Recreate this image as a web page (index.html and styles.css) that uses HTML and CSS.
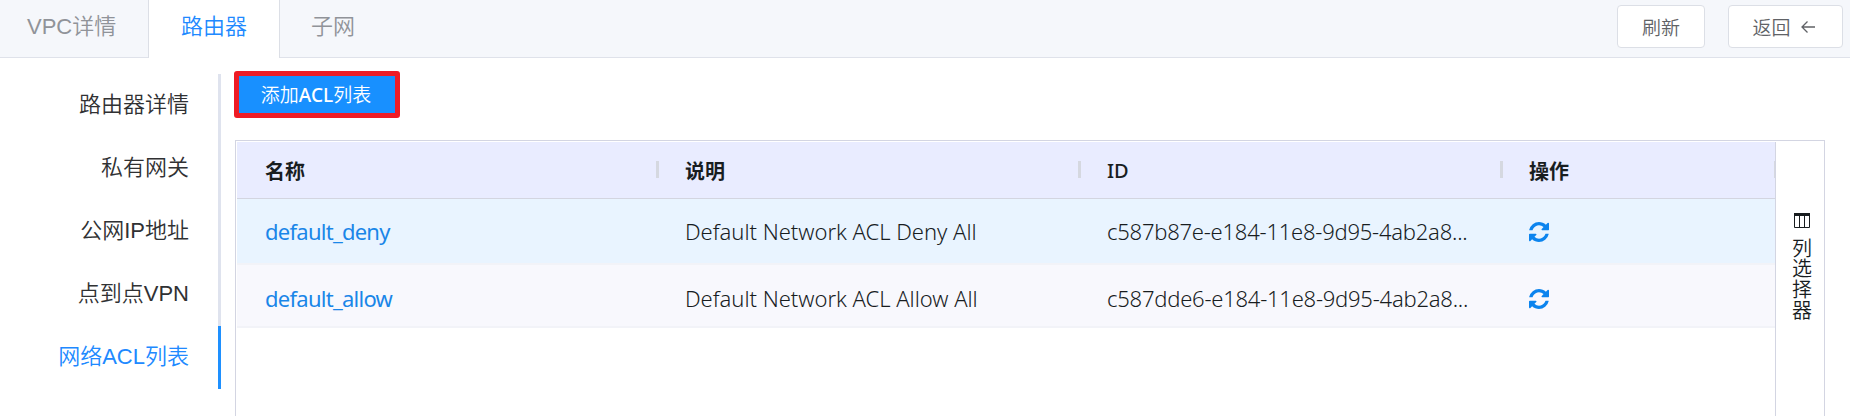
FILE: index.html
```html
<!DOCTYPE html>
<html lang="zh-CN">
<head>
<meta charset="utf-8">
<title>网络ACL列表</title>
<link rel="stylesheet" href="styles.css">
</head>
<body>
<svg class="defs" width="0" height="0" aria-hidden="true">
  <symbol id="refresh" viewBox="0 0 1536 1536"><path d="M1511 928q0 5-1 7-64 268-268 434.500t-478 166.500q-146 0-282.500-55t-243.500-157l-129 129q-19 19-45 19t-45-19-19-45v-448q0-26 19-45t45-19h448q26 0 45 19t19 45-19 45l-137 137q71 66 161 102t187 36q134 0 250-65t186-179q11-17 53-117 8-23 30-23h192q13 0 22.500 9.500t9.500 22.500zm25-800v448q0 26-19 45t-45 19h-448q-26 0-45-19t-19-45 19-45l138-138q-148-137-349-137-134 0-250 65t-186 179q-11 17-53 117-8 23-30 23h-199q-13 0-22.500-9.500t-9.500-22.500v-7q65-268 270-434.500t480-166.500q146 0 284 55.500t245 156.500l130-129q19-19 45-19t45 19 19 45z"/></symbol>
</svg>
<header class="topbar">
  <nav class="tabs">
    <a class="tab tab-first">VPC详情</a>
    <a class="tab active">路由器</a>
    <a class="tab">子网</a>
  </nav>
  <div class="actions">
    <button class="btn">刷新</button>
    <button class="btn btn-back">返回
      <svg class="arrow" viewBox="0 0 14 12"><path d="M14 6H1M6.500 .5L1 6l5.500 5.500"/></svg>
    </button>
  </div>
</header>
<main class="main">
  <nav class="side">
    <a class="side-item">路由器详情</a>
    <a class="side-item">私有网关</a>
    <a class="side-item">公网IP地址</a>
    <a class="side-item">点到点VPN</a>
    <a class="side-item current">网络ACL列表</a>
  </nav>
  <section class="content">
    <button class="add">添加<span class="add-latin">ACL</span>列表</button>
    <div class="grid">
      <div class="table">
        <div class="row head">
          <div class="cell"><span>名称</span></div>
          <div class="cell"><span>说明</span></div>
          <div class="cell"><span class="head-latin">ID</span></div>
          <div class="cell"><span>操作</span></div>
        </div>
        <div class="row hover">
          <div class="cell"><a class="link">default_deny</a></div>
          <div class="cell"><span class="desc">Default Network ACL Deny All</span></div>
          <div class="cell"><span class="uuid">c587b87e-e184-11e8-9d95-4ab2a8...</span></div>
          <div class="cell"><svg class="refresh"><use href="#refresh"/></svg></div>
        </div>
        <div class="row odd">
          <div class="cell"><a class="link">default_allow</a></div>
          <div class="cell"><span class="desc">Default Network ACL Allow All</span></div>
          <div class="cell"><span class="uuid">c587dde6-e184-11e8-9d95-4ab2a8...</span></div>
          <div class="cell"><svg class="refresh"><use href="#refresh"/></svg></div>
        </div>
      </div>
      <aside class="picker">
        <svg class="columns" viewBox="0 0 16 15"><path class="columns-top" d="M0 0h16v3H0z"/><path d="M.5 2v12.500h15V2M5.500 3v11M10.500 3v11"/></svg>
        <span class="picker-label">列选择器</span>
      </aside>
    </div>
  </section>
</main>
</body>
</html>
```

FILE: styles.css
```css
* { box-sizing: border-box; }
body {
  margin: 0;
  height: 416px;
  overflow: hidden;
  display: flex;
  flex-direction: column;
  background: #fff;
  color: #303133;
  font-family: "Liberation Sans", "Noto Sans CJK SC", sans-serif;
  font-weight: 350;
}
.defs { position: absolute; }
button { font: inherit; padding: 0; margin: 0; }
.topbar {
  height: 58px;
  flex: none;
  display: flex;
  justify-content: space-between;
  background: #f5f7fb;
  border-bottom: 1px solid #dfe2ea;
}
.tabs { display: flex; }
.tab {
  height: 57px;
  padding: 0 31px;
  font-size: 22px;
  line-height: 54px;
  color: #909399;
  white-space: nowrap;
}
.tab-first { padding: 0 32px 0 27px; width: 148px; }
.tab.active {
  width: 132px;
  height: 58px;
  padding-left: 32px;
  border: solid #dcdfe6;
  border-width: 0 1px;
  background: #fff;
  color: #2089ff;
}
.actions {
  display: flex;
  gap: 23px;
  padding: 5px 7px 0 0;
}
.btn {
  width: 88px;
  height: 43px;
  display: flex;
  align-items: center;
  justify-content: center;
  border: 1px solid #dcdfe6;
  border-radius: 4px;
  background: #fff;
  color: #606266;
  font-size: 19px;
}
.btn-back { width: 115px; gap: 10px; padding-right: 4px; }
.arrow {
  width: 14px;
  height: 12px;
  fill: none;
  stroke: #606266;
  stroke-width: 1.300;
}
.main { flex: 1; display: flex; }
.side {
  width: 221px;
  padding-top: 16px;
  display: flex;
  flex-direction: column;
}
.side-item {
  flex: none;
  height: 63px;
  padding-right: 29px;
  border-right: 3px solid #dfe3ee;
  text-align: right;
  font-size: 22px;
  line-height: 61px;
}
.side-item.current { border-color: #1e90ff; color: #2089ff; }
.content {
  flex: 1;
  padding: 13px 25px 0 13px;
  display: flex;
  flex-direction: column;
  align-items: flex-start;
}
.add {
  flex: none;
  width: 166px;
  height: 47px;
  padding-right: 2px;
  border: 5px solid #ee1c25;
  border-radius: 3px;
  background: #1890ff;
  color: #fff;
  font: 350 19px/36px "Noto Sans", "Noto Sans CJK SC", sans-serif;
}
.add-latin { font-weight: 500; }
.grid {
  flex: none;
  width: 1590px;
  height: 290px;
  margin: 22px 0 0 1px;
  padding: 1px 0 0 1px;
  display: flex;
  border: 1px solid #d3d5e2;
}
.table { width: 1538px; }
.row {
  display: grid;
  grid-template-columns: 422px 422px 422px 272px;
  height: 63px;
  font-family: "Noto Sans", "Noto Sans CJK SC", sans-serif;
  font-size: 22px;
  font-weight: 300;
  color: #181d1f;
}
.cell {
  position: relative;
  display: flex;
  align-items: center;
  padding-left: 26px;
  white-space: nowrap;
}
.cell:first-child { padding-left: 28px; }
.head {
  height: 57px;
  background: #e9ecff;
  border-bottom: 1px solid #d3d5e0;
  font-size: 20px;
  font-weight: 700;
}
.head-latin { font-weight: 500; }
.head .cell::after {
  content: "";
  position: absolute;
  right: 0;
  top: 19px;
  width: 3px;
  height: 17px;
  background: #d5d8e0;
}
.head .cell:last-child::after { width: 1px; }
.hover { height: 66px; background: #e9f4ff; border-bottom: 2px solid #f2f3f8; }
.odd { padding-top: 4px; background: #f8f8fd; border-bottom: 2px solid #f2f3f8; }
.link { color: #1a86e8; font-weight: 400; letter-spacing: -.74px; }
.desc { letter-spacing: -.02px; }
.uuid { letter-spacing: -.23px; }
.refresh { width: 20px; height: 20px; margin-top: 2px; fill: #0c84ee; }
.picker {
  width: 49px;
  border-left: 1px solid #d3d5e2;
  padding: 71px 0 0 3px;
  display: flex;
  flex-direction: column;
  align-items: center;
  gap: 10px;
}
.columns { width: 16px; height: 15px; fill: none; stroke: #181d1f; }
.columns .columns-top { fill: #181d1f; stroke: none; }
.picker-label {
  writing-mode: vertical-rl;
  font: 350 20px/24px "Noto Sans CJK SC", sans-serif;
  letter-spacing: .7px;
  color: #181d1f;
}
```
